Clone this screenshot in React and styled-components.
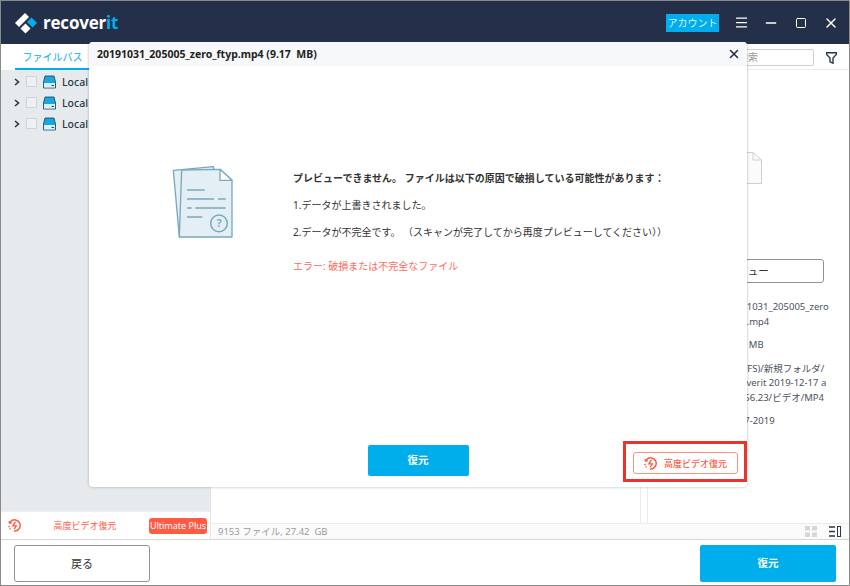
import React from 'react';
import styled, { createGlobalStyle } from 'styled-components';
import { X, Minus, Menu, Square } from 'lucide-react';

const font = `"Noto Sans", "Noto Sans CJK JP", sans-serif`;
const blue = '#00aeec';
const coral = '#ff5b45';
const navy = '#24304a';

const Global = createGlobalStyle`
html, body { margin: 0; padding: 0; background: #fff; }
body { font-family: ${font}; color: #333; }
* { box-sizing: border-box; }
`

const Frame = styled.div`
position: relative;
width: 850px;
height: 586px;
border: 1px solid #8a8a8a;
display: flex;
flex-direction: column;
overflow: hidden;
background: #fff;
`

const Header = styled.header`
height: 43px;
flex: none;
background: ${navy};
display: flex;
align-items: center;
padding: 0 3px 0 13px;
`

const Brand = styled.div`
display: flex;
align-items: center;
gap: 5px;
flex: 1;
`

const BrandName = styled.span`
font-family: "Open Sans", sans-serif;
font-weight: 700;
font-size: 17px;
letter-spacing: -0.2px;
color: #fff;
b { color: ${blue}; font-weight: 700; }
`

const Account = styled.div`
width: 53px;
height: 18px;
background: ${blue};
color: #dff5fd;
font-size: 10px;
line-height: 18px;
text-align: center;
margin-right: 7px;
`

const WinButton = styled.div`
width: 30px;
display: flex;
justify-content: center;
align-items: center;
color: #fff;
`

const Main = styled.div`
flex: 1;
min-height: 0;
display: flex;
`

const Sidebar = styled.aside`
width: 210px;
flex: none;
display: flex;
flex-direction: column;
background: #e6eaed;
border-right: 1px solid #e3e5e7;
`

const Tabs = styled.div`
height: 26px;
background: #fff;
padding-left: 14px;
`

const Tab = styled.div`
width: 75px;
height: 26px;
border-bottom: 2px solid ${blue};
color: ${blue};
font-size: 10px;
line-height: 26px;
text-align: center;
`

const Tree = styled.div`
flex: 1;
padding-top: 1px;
`

const TreeRow = styled.div`
height: 21px;
display: flex;
align-items: center;
padding-left: 13px;
font-size: 10.5px;
color: #2b3648;
`

const Check = styled.span`
width: 11px;
height: 11px;
margin: 0 6px 0 6px;
border: 1px solid #cfd4d8;
background: #eef1f3;
`

const DiskLabel = styled.span`
margin-left: 6px;
font-weight: 500;
`

const Upsell = styled.div`
height: 28px;
flex: none;
background: #fff;
border-top: 1px solid #eceef0;
display: flex;
align-items: center;
padding-left: 7px;
color: ${coral};
font-size: 9px;
`

const UpsellLabel = styled.span`
flex: 1;
text-align: center;
`

const Badge = styled.span`
width: 58px;
height: 16px;
margin-right: 3px;
border-radius: 3px;
background: ${coral};
color: #fff;
font-size: 9px;
line-height: 16px;
text-align: center;
`

const Content = styled.div`
flex: 1;
min-width: 0;
display: flex;
flex-direction: column;
`

const Toolbar = styled.div`
height: 26px;
flex: none;
display: flex;
justify-content: flex-end;
align-items: center;
padding: 2px 12px 0 0;
border-bottom: 1px solid #ececec;
`

const Search = styled.div`
width: 180px;
height: 17px;
border: 1px solid #cfcfcf;
border-radius: 2px;
color: #999;
font-size: 10px;
line-height: 15px;
padding-left: 103px;
margin-right: 12px;
`

const Panels = styled.div`
flex: 1;
min-height: 0;
display: flex;
`

const FileList = styled.div`
flex: 1;
border-right: 1px solid #ececec;
`

const Gutter = styled.div`
width: 7px;
flex: none;
border-right: 1px solid #ececec;
`

const Details = styled.div`
width: 201px;
flex: none;
padding: 0 25px 0 13px;
display: flex;
flex-direction: column;
`

const Thumb = styled.svg`
display: block;
margin: 82px 0 0 63px;
`

const PreviewButton = styled.div`
height: 24px;
margin-top: 75px;
border: 1px solid #8d939c;
border-radius: 3px;
font-size: 10.5px;
line-height: 22px;
text-align: center;
`

const Meta = styled.dl`
margin: 17px 0 0;
display: grid;
grid-template-columns: 64px 1fr;
row-gap: 9px;
font-size: 9.5px;
line-height: 14.5px;
color: #4a5160;
dt, dd { margin: 0; }
dd { white-space: pre; }
`

const StatusBar = styled.div`
height: 16px;
flex: none;
display: flex;
align-items: center;
justify-content: space-between;
padding: 0 8px 1px 7px;
background: #fbfbfb;
border-top: 1px solid #ececec;
color: #9a9a9a;
font-size: 9.5px;
white-space: pre;
`

const ViewIcons = styled.div`
display: flex;
gap: 12px;
align-items: center;
`

const Footer = styled.footer`
height: 46px;
flex: none;
display: flex;
justify-content: space-between;
align-items: center;
padding: 2px 13px 0;
border-top: 1px solid #d4d6d8;
`

const BackButton = styled.div`
width: 136px;
height: 37px;
border: 1px solid #8d939c;
border-radius: 3px;
font-size: 11px;
line-height: 35px;
text-align: center;
`

const PrimaryButton = styled.div`
width: ${p => p.$wide ? 136 : 101}px;
height: ${p => p.$wide ? 37 : 31}px;
background: ${blue};
border-radius: 2px;
color: #fff;
font-size: 10.5px;
font-weight: 700;
line-height: ${p => p.$wide ? 37 : 31}px;
text-align: center;
`

const Modal = styled.section`
position: absolute;
left: 88px;
top: 41px;
width: 658px;
height: 445px;
display: flex;
flex-direction: column;
background: #fff;
border-radius: 4px;
box-shadow: 0 0 3px rgba(60, 70, 80, .4);
`

const ModalTitle = styled.div`
height: 24px;
flex: none;
display: flex;
align-items: center;
justify-content: space-between;
padding: 0 6px 0 8px;
background: #f7f8f9;
border-radius: 4px 4px 0 0;
font-size: 10.5px;
font-weight: 700;
color: #222;
white-space: pre;
`

const ModalBody = styled.div`
flex: 1;
display: flex;
padding: 85px 0 0 62px;
`

const Message = styled.div`
margin-left: 32px;
padding-top: 19px;
font-size: 10px;
line-height: 16px;
color: #333;
`

const Line = styled.p`
margin: 0 0 ${p => p.$gap || 11}px;
font-weight: ${p => p.$bold ? 700 : 400};
color: ${p => p.$error ? '#ff6a5c' : 'inherit'};
`

const ModalFooter = styled.div`
position: relative;
height: 42px;
flex: none;
display: flex;
justify-content: center;
align-items: flex-start;
`

const OutlineButton = styled.div`
position: absolute;
right: 9px;
top: 7px;
width: 105px;
height: 22px;
display: flex;
align-items: center;
justify-content: center;
gap: 7px;
border: 1px solid #ff8f80;
border-radius: 3px;
color: ${coral};
font-size: 9px;
font-weight: 500;
`

const Callout = styled.div`
position: absolute;
right: 0;
top: -4px;
width: 124px;
height: 41px;
border: 3px solid #e8342a;
`

const Logo = () => (
  <svg width="24" height="24" viewBox="0 0 24 24">
    <path d="M1 12 L11 2 L15 6 L5 16 Z" fill="#fff" />
    <path d="M6.5 17.5 L11.5 12.5 L16.5 17.5 L11.5 22.5 Z" fill="#fff" />
    <path d="M13 11 L17.5 6.5 L23 12 L18.5 16.5 Z" fill={blue} />
  </svg>
)

const Chevron = () => (
  <svg width="6" height="8" viewBox="0 0 6 8">
    <path d="M1 1 L4.5 4 L1 7" fill="none" stroke="#2b3648" strokeWidth="1.6" />
  </svg>
)

const Disk = () => (
  <svg width="13" height="14" viewBox="0 0 13 14">
    <path d="M2 1 H11 L12.5 7 V13 H.5 V7 Z" fill="#16a9e0" stroke="#1d3c57" strokeWidth=".8" />
    <rect x="1" y="8" width="11" height="4.6" fill="#d9f1fa" />
    <rect x="8.5" y="10" width="2.4" height="1" fill="#1d3c57" />
  </svg>
)

const Filter = () => (
  <svg width="11" height="12" viewBox="0 0 11 12">
    <path d="M.6 .8 H10.4 V2.4 L7 6 V11.2 L4 9.8 V6 L.6 2.4 Z" fill="#fff" stroke="#2b3648" strokeWidth="1.4" />
  </svg>
)

const Boost = () => (
  <svg width="13" height="13" viewBox="0 0 14 14" fill="none" stroke={coral}>
    <path d="M2.4 3.2 A6 6 0 1 1 6.4 12.9" strokeWidth="1.6" />
    <path d="M1.1 7.4 A6 6 0 0 0 3.6 11.9" strokeWidth="1.6" strokeDasharray="1.4 1.2" />
    <path d="M.6 3.6 H4.4 V.6" strokeWidth="0" />
    <path d="M1 2.4 L1.4 4.8 L4 4.2 Z" fill={coral} strokeWidth="1" />
    <path d="M8 3.2 L5.2 7.4 H8.8 L6.8 10.8" strokeWidth="1.5" />
  </svg>
)

const DocsIcon = () => (
  <svg width="110" height="100" viewBox="0 0 330 300" style={{ flex: 'none', display: 'block' }}>
    <g stroke="#79a8bf" strokeWidth="4" strokeLinejoin="round">
      <path d="M67 58 L187 47 L190 60 L92 240 L85 258 Z" fill="#e4eff5" />
      <path d="M92 57 L207 55 L243 88 V258 H85 Z" fill="#e4eff5" />
      <path d="M207 55 V88 H243 Z" fill="#fff" />
    </g>
    <g stroke="#79a8bf" strokeWidth="4.5">
      <path d="M108 117 H161" />
      <path d="M108 144 H189 M201 144 H224" />
      <path d="M108 171 H122 M133 171 H224" />
      <path d="M108 198 H154" />
      <circle cx="204" cy="217" r="25" fill="none" />
    </g>
    <text x="204" y="229" textAnchor="middle" fontSize="34" fontWeight="600" fontFamily="Noto Sans, sans-serif" fill="#79a8bf">?</text>
  </svg>
)

const GridIcon = () => (
  <svg width="12" height="11" viewBox="0 0 12 11" fill="#d4d6d8">
    <rect width="5" height="4.5" />
    <rect x="7" width="5" height="4.5" />
    <rect y="6.5" width="5" height="4.5" />
    <rect x="7" y="6.5" width="5" height="4.5" />
  </svg>
)

const DetailIcon = () => (
  <svg width="12" height="11" viewBox="0 0 12 11" fill="none" stroke="#2b3648">
    <path d="M0 1 H6 M0 5.5 H6 M0 10 H6" strokeWidth="1.4" />
    <rect x="8.5" y=".5" width="3" height="10" strokeWidth="1" />
  </svg>
)

const drives = ['Local Disk(C:)', 'Local Disk(D:)', 'Local Disk(E:)']

export default function App() {
  return <Frame>
    <Global />
    <Header>
      <Brand>
        <Logo />
        <BrandName>recover<b>it</b></BrandName>
      </Brand>
      <Account>アカウント</Account>
      <WinButton><Menu size={15} strokeWidth={2} /></WinButton>
      <WinButton><Minus size={16} strokeWidth={2} /></WinButton>
      <WinButton><Square size={12} strokeWidth={2} /></WinButton>
      <WinButton><X size={16} strokeWidth={2.2} /></WinButton>
    </Header>
    <Main>
      <Sidebar>
        <Tabs><Tab>ファイルパス</Tab></Tabs>
        <Tree>
          {drives.map(d => <TreeRow key={d}><Chevron /><Check /><Disk /><DiskLabel>{d}</DiskLabel></TreeRow>)}
        </Tree>
        <Upsell>
          <Boost />
          <UpsellLabel>高度ビデオ復元</UpsellLabel>
          <Badge>Ultimate Plus</Badge>
        </Upsell>
      </Sidebar>
      <Content>
        <Toolbar>
          <Search>検索</Search>
          <Filter />
        </Toolbar>
        <Panels>
          <FileList />
          <Gutter />
          <Details>
            <Thumb width="38" height="32" viewBox="0 0 38 32">
              <path d="M.5 .5 H29 L37.5 8 V31.5 H.5 Z" fill="#fbfbfb" stroke="#cfcfcf" />
              <path d="M29 .5 V8 H37.5" fill="none" stroke="#cfcfcf" />
            </Thumb>
            <PreviewButton>プレビュー</PreviewButton>
            <Meta>
              <dt>名前</dt><dd>{'20191031_205005_zero\n_ftyp.mp4'}</dd>
              <dt>サイズ</dt><dd>9.17  MB</dd>
              <dt>パス</dt><dd>{'D(NTFS)/新規フォルダ/\nRecoverit 2019-12-17 a\nt 14.56.23/ビデオ/MP4'}</dd>
              <dt>更新日</dt><dd>10-27-2019</dd>
            </Meta>
          </Details>
        </Panels>
        <StatusBar>
          <span>9153 ファイル, 27.42  GB</span>
          <ViewIcons><GridIcon /><DetailIcon /></ViewIcons>
        </StatusBar>
      </Content>
    </Main>
    <Footer>
      <BackButton>戻る</BackButton>
      <PrimaryButton $wide>復元</PrimaryButton>
    </Footer>
    <Modal>
      <ModalTitle>
        <span>20191031_205005_zero_ftyp.mp4 (9.17  MB)</span>
        <X size={14} strokeWidth={2.6} color={navy} />
      </ModalTitle>
      <ModalBody>
        <DocsIcon />
        <Message>
          <Line $bold>プレビューできません。 ファイルは以下の原因で破損している可能性があります：</Line>
          <Line>1.データが上書きされました。</Line>
          <Line $gap={18}>2.データが不完全です。 （スキャンが完了してから再度プレビューしてください））</Line>
          <Line $error>エラー: 破損または不完全なファイル</Line>
        </Message>
      </ModalBody>
      <ModalFooter>
        <PrimaryButton>復元</PrimaryButton>
        <OutlineButton><Boost />高度ビデオ復元</OutlineButton>
        <Callout />
      </ModalFooter>
    </Modal>
  </Frame>
}
